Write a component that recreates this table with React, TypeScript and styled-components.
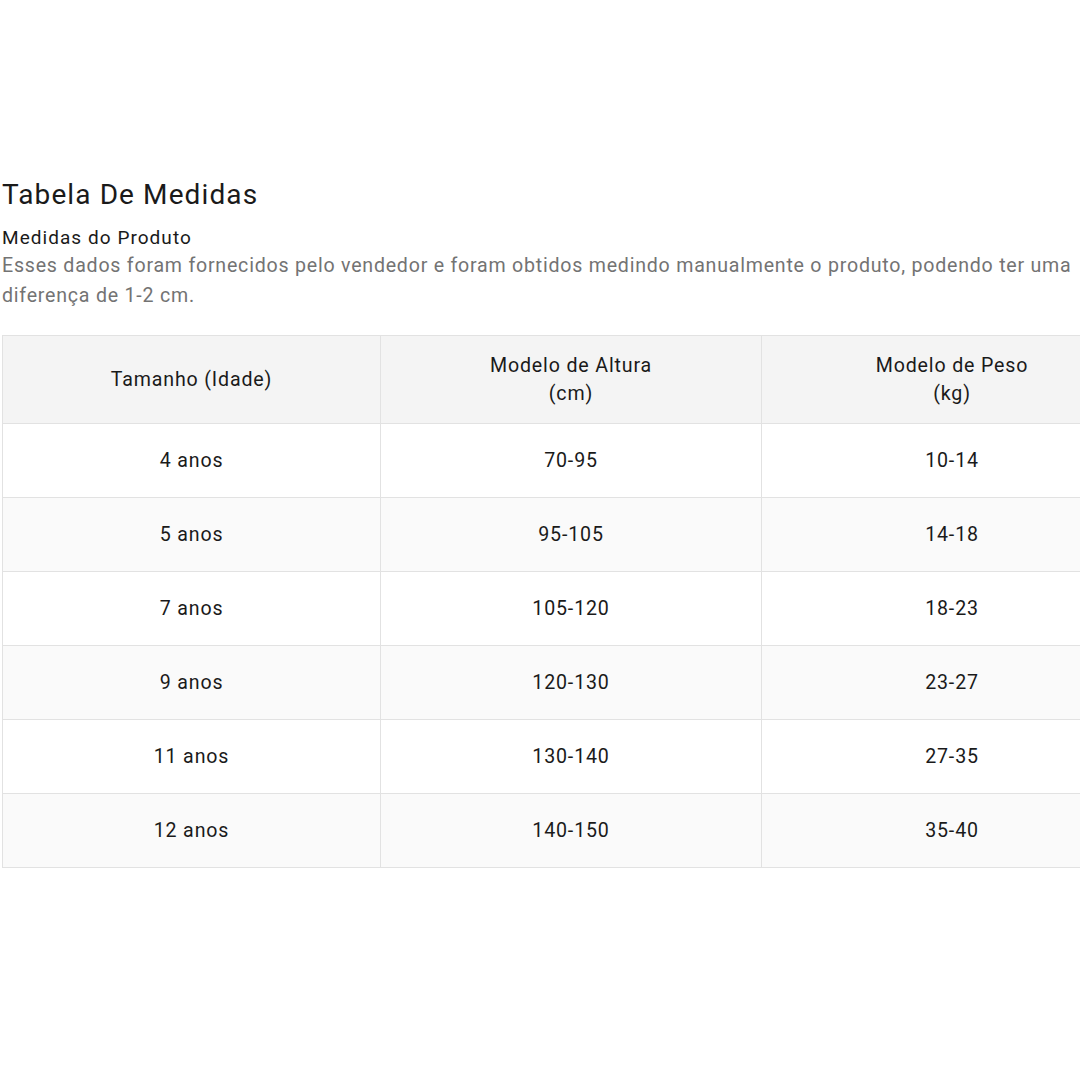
import React from "react";
import styled, { createGlobalStyle } from "styled-components";

const Global = createGlobalStyle`
  html, body { margin: 0; padding: 0; background: #ffffff; }
  body { font-family: Roboto, "Noto Sans", Arial, sans-serif; }
`;

const Page = styled.div`
  width: 1080px;
  height: 1080px;
  overflow: hidden;
  padding: 176px 0 0 2px;
  box-sizing: border-box;
`;

const Title = styled.h1`
  margin: 0;
  font-size: 28px;
  font-weight: 400;
  line-height: 38px;
  letter-spacing: 1.1px;
  color: #1a1a1a;
`;

const Subtitle = styled.h2`
  margin: 11px 0 0;
  font-size: 19px;
  font-weight: 400;
  line-height: 26px;
  letter-spacing: 1.05px;
  color: #1a1a1a;
`;

const Description = styled.p`
  margin: 0;
  font-size: 19.6px;
  line-height: 30px;
  letter-spacing: 0.77px;
  color: #737373;
  width: 1110px;
`;

const Table = styled.table`
  margin-top: 24px;
  border-collapse: collapse;
  width: 1140px;
  table-layout: fixed;
  font-size: 19.6px;
  letter-spacing: 0.85px;
  color: #1a1a1a;
`;

const HeadCell = styled.th`
  background: #f4f4f4;
  font-weight: 400;
  height: 87px;
  line-height: 28px;
  text-align: center;
  border: 1px solid #e2e2e2;
  padding: 0 10px;
`;

const Row = styled.tr<{ $alt: boolean }>`
  background: ${(p) => (p.$alt ? "#fafafa" : "#ffffff")};
`;

const Cell = styled.td`
  height: 74px;
  text-align: center;
  border: 1px solid #e2e2e2;
  padding: 0;
  box-sizing: border-box;
`;

const rows = [
  ["4 anos", "70-95", "10-14"],
  ["5 anos", "95-105", "14-18"],
  ["7 anos", "105-120", "18-23"],
  ["9 anos", "120-130", "23-27"],
  ["11 anos", "130-140", "27-35"],
  ["12 anos", "140-150", "35-40"],
];

export default function App() {
  return (
    <Page>
      <Global />
      <Title>Tabela De Medidas</Title>
      <Subtitle>Medidas do Produto</Subtitle>
      <Description>
        Esses dados foram fornecidos pelo vendedor e foram obtidos medindo manualmente o produto, podendo ter uma
        <br />
        diferença de 1-2 cm.
      </Description>
      <Table>
        <colgroup>
          <col style={{ width: 378 }} />
          <col style={{ width: 381 }} />
          <col style={{ width: 381 }} />
        </colgroup>
        <thead>
          <tr>
            <HeadCell>Tamanho (Idade)</HeadCell>
            <HeadCell>
              Modelo de Altura
              <br />
              (cm)
            </HeadCell>
            <HeadCell>
              Modelo de Peso
              <br />
              (kg)
            </HeadCell>
          </tr>
        </thead>
        <tbody>
          {rows.map((r, i) => (
            <Row key={i} $alt={i % 2 === 1}>
              {r.map((c, j) => (
                <Cell key={j}>{c}</Cell>
              ))}
            </Row>
          ))}
        </tbody>
      </Table>
    </Page>
  );
}
